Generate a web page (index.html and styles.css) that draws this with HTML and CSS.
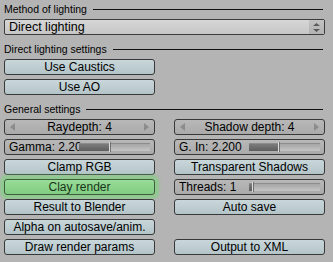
FILE: index.html
```html
<!DOCTYPE html>
<html lang="en">
<head>
    <meta charset="UTF-8">
    <title>Render settings</title>
    <link rel="stylesheet" href="styles.css">
</head>
<body>
    <div class="panel">
        <div class="section-title"><span>Method of lighting</span></div>
        <div class="menu">
            <span class="menu-label">Direct lighting</span>
            <span class="menu-arrows">
                <svg width="9" height="11" viewBox="0 0 9 11">
                    <path d="M1 4 L4.5 1 L8 4 Z M1 7 L4.5 10 L8 7 Z" fill="#5a5a5a"/>
                </svg>
            </span>
        </div>

        <div class="section-title gap-top"><span>Direct lighting settings</span></div>
        <div class="grid">
            <div class="btn toggle">Use Caustics</div>
            <div></div>
            <div class="btn toggle">Use AO</div>
            <div></div>
        </div>

        <div class="section-title gap-top"><span>General settings</span></div>
        <div class="grid">
            <div class="btn num">
                <svg class="arrow" width="5" height="8" viewBox="0 0 5 8"><path d="M5 0 L0 4 L5 8 Z" fill="#8c8c8c"/></svg>
                <span>Raydepth: 4</span>
                <svg class="arrow" width="5" height="8" viewBox="0 0 5 8"><path d="M0 0 L5 4 L0 8 Z" fill="#8c8c8c"/></svg>
            </div>
            <div class="btn num">
                <svg class="arrow" width="5" height="8" viewBox="0 0 5 8"><path d="M5 0 L0 4 L5 8 Z" fill="#8c8c8c"/></svg>
                <span>Shadow depth: 4</span>
                <svg class="arrow" width="5" height="8" viewBox="0 0 5 8"><path d="M0 0 L5 4 L0 8 Z" fill="#8c8c8c"/></svg>
            </div>

            <div class="btn slider">
                <span class="slider-label">Gamma: 2.20</span>
                <span class="track"><span class="fill" style="width: 42%"></span><span class="handle"></span></span>
            </div>
            <div class="btn slider">
                <span class="slider-label">G. In: 2.200</span>
                <span class="track"><span class="fill" style="width: 41%"></span><span class="handle"></span></span>
            </div>

            <div class="btn toggle">Clamp RGB</div>
            <div class="btn toggle">Transparent Shadows</div>

            <div class="btn toggle active">Clay render</div>
            <div class="btn slider">
                <span class="slider-label">Threads: 1</span>
                <span class="track"><span class="fill" style="width: 4%"></span><span class="handle"></span></span>
            </div>

            <div class="btn toggle">Result to Blender</div>
            <div class="btn toggle">Auto save</div>

            <div class="btn toggle">Alpha on autosave/anim.</div>
            <div></div>

            <div class="btn toggle">Draw render params</div>
            <div class="btn toggle">Output to XML</div>
        </div>
    </div>
</body>
</html>
```

FILE: styles.css
```css
* {
    margin: 0;
    padding: 0;
    box-sizing: border-box;
}

body {
    background: #b4b4b4;
    font-family: 'Liberation Sans', Arial, sans-serif;
    color: #000;
    padding: 2px 0 0 4px;
}

.panel {
    width: 321px;
}

.section-title {
    display: flex;
    align-items: center;
    gap: 6px;
    height: 14px;
    margin-right: 2px;
    font-size: 10.5px;
}

.section-title::after {
    content: '';
    flex: 1;
    border-top: 1px solid #111;
}

.gap-top {
    margin-top: 7px;
}

.menu {
    display: flex;
    align-items: center;
    height: 16px;
    margin-top: 3px;
    border: 1px solid #3c3c3c;
    border-radius: 2px;
    background: linear-gradient(#d6d6d6, #c6c6c6);
    font-size: 12.5px;
}

.menu-label {
    flex: 1;
    padding-left: 4px;
}

.menu-arrows {
    display: flex;
    align-items: center;
    justify-content: center;
    width: 15px;
    height: 100%;
    background: linear-gradient(#c2c2c2, #b2b2b2);
}

.grid {
    display: grid;
    grid-template-columns: 151px 151px;
    grid-auto-rows: 16px;
    column-gap: 19px;
    row-gap: 4px;
    margin-top: 3px;
}

.btn {
    display: flex;
    align-items: center;
    justify-content: center;
    border: 1px solid #383838;
    border-radius: 3px;
    font-size: 12px;
    white-space: nowrap;
}

.toggle {
    background: linear-gradient(#c9d7da, #b3c4c8);
}

.toggle.active {
    background: linear-gradient(#98dc98, #82cc82);
    border-color: #3d5e3d;
    color: #17351a;
    box-shadow: 0 0 3px 4px rgba(130, 210, 130, 0.75);
}

.num {
    justify-content: space-between;
    padding: 0 5px;
    background: linear-gradient(#b8b8b8, #aaaaaa);
}

.slider {
    justify-content: flex-start;
    padding: 0 4px;
    background: linear-gradient(#b8b8b8, #aaaaaa);
}

.slider-label {
    width: 70px;
}

.track {
    position: relative;
    flex: 1;
    display: flex;
    height: 8px;
    background: linear-gradient(#a6a6a6, #c4c4c4);
    border-top: 1px solid #8c8c8c;
}

.fill {
    background: linear-gradient(#7c7c7c, #5e5e5e);
}

.handle {
    width: 2px;
    height: 10px;
    margin-top: -2px;
    background: #dcdcdc;
    border-right: 1px solid #707070;
}
```
